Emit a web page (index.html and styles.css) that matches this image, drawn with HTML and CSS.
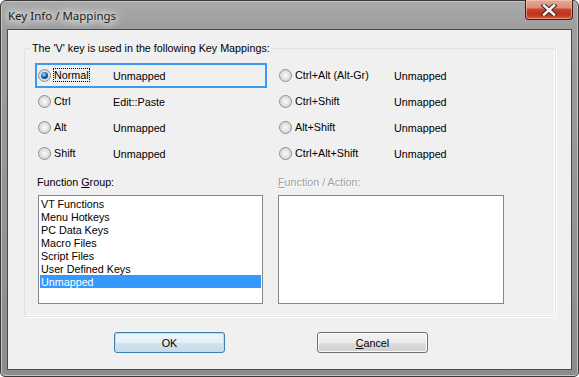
FILE: index.html
```html
<!DOCTYPE html>
<html>
<head>
<meta charset="utf-8">
<link rel="stylesheet" href="styles.css">
</head>
<body>
<div class="window">
  <div class="titlebar">
    <span class="title">Key Info / Mappings</span>
    <button class="close" aria-label="Close">
      <svg width="16" height="12" viewBox="0 0 16 12">
        <path d="M3 1.5 L13 10.5 M13 1.5 L3 10.5" stroke="#3a2a28" stroke-width="4.6" stroke-linecap="square" fill="none"/>
        <path d="M3 1.5 L13 10.5 M13 1.5 L3 10.5" stroke="#f4f4f4" stroke-width="2.6" stroke-linecap="square" fill="none"/>
      </svg>
    </button>
  </div>
  <div class="client">
    <div class="group">
      <span class="group-title">The 'V' key is used in the following Key Mappings:</span>
      <div class="options">
        <div class="opt focused"><span class="radio checked"></span><span class="opt-label"><span class="focus-text">Normal</span></span><span class="opt-value">Unmapped</span></div>
        <div class="opt right"><span class="radio"></span><span class="opt-label">Ctrl+Alt (Alt-Gr)</span><span class="opt-value">Unmapped</span></div>
        <div class="opt"><span class="radio"></span><span class="opt-label">Ctrl</span><span class="opt-value">Edit::Paste</span></div>
        <div class="opt right"><span class="radio"></span><span class="opt-label">Ctrl+Shift</span><span class="opt-value">Unmapped</span></div>
        <div class="opt"><span class="radio"></span><span class="opt-label">Alt</span><span class="opt-value">Unmapped</span></div>
        <div class="opt right"><span class="radio"></span><span class="opt-label">Alt+Shift</span><span class="opt-value">Unmapped</span></div>
        <div class="opt"><span class="radio"></span><span class="opt-label">Shift</span><span class="opt-value">Unmapped</span></div>
        <div class="opt right"><span class="radio"></span><span class="opt-label">Ctrl+Alt+Shift</span><span class="opt-value">Unmapped</span></div>
      </div>
      <div class="lists">
        <div class="list-col">
          <div class="list-label">Function <u>G</u>roup:</div>
          <div class="listbox">
            <div class="item">VT Functions</div>
            <div class="item">Menu Hotkeys</div>
            <div class="item">PC Data Keys</div>
            <div class="item">Macro Files</div>
            <div class="item">Script Files</div>
            <div class="item">User Defined Keys</div>
            <div class="item selected">Unmapped</div>
          </div>
        </div>
        <div class="list-col wide">
          <div class="list-label disabled"><u>F</u>unction / Action:</div>
          <div class="listbox"></div>
        </div>
      </div>
    </div>
    <div class="buttons">
      <button class="btn default">OK</button>
      <button class="btn"><u>C</u>ancel</button>
    </div>
  </div>
</div>
</body>
</html>
```
FILE: styles.css
```css
* { box-sizing: border-box; }
html, body { margin: 0; padding: 0; background: #ffffff; }
body { width: 579px; height: 377px; overflow: hidden; }

.window {
  position: relative;
  width: 579px;
  height: 377px;
  border: 1px solid #3a3a3a;
  border-radius: 6px 6px 5px 5px;
  background: linear-gradient(to bottom, #a9a9a9 0px, #9d9d9d 30px, #8c8c8c 377px);
  box-shadow: inset 0 0 0 1px #c4c4c4;
  padding: 0 6px 6px 6px;
  display: flex;
  flex-direction: column;
}

.titlebar {
  height: 28px;
  display: flex;
  align-items: center;
  padding-left: 1px;
  padding-top: 1px;
}
.title {
  font-family: "Noto Sans", "Open Sans", sans-serif;
  font-size: 11.5px;
  color: #1c1c1c;
  text-shadow: 0 0 6px #ffffff, 0 0 10px #ffffff, 0 0 14px #f0f0f0;
}

.close {
  position: absolute;
  top: -1px;
  right: 5px;
  width: 48px;
  height: 20px;
  border: 1px solid #4d1a12;
  border-top: none;
  border-radius: 0 0 4px 4px;
  padding: 0;
  background: linear-gradient(to bottom, #e6aa98 0%, #d98d78 40%, #c9442b 50%, #c0301c 75%, #d55a3c 100%);
  box-shadow: inset 0 0 0 1px rgba(255, 200, 180, 0.55);
  display: flex;
  align-items: center;
  justify-content: center;
}
.close svg { display: block; }

.client {
  flex: 1;
  border: 1px solid #4a4a4a;
  background: #f0f0f0;
  display: flex;
  flex-direction: column;
  font-family: "Liberation Sans", Arial, sans-serif;
  font-size: 10.75px;
  color: #000;
}

.group {
  position: relative;
  margin: 18px 0 0 16px;
  width: 532px;
  border: 1px solid #dbe3e8;
  border-radius: 3px;
  box-shadow: inset -1px -1px 0 #ffffff, 1px 1px 0 #ffffff;
  padding: 14px 0 12px 10px;
}
.group-title {
  position: absolute;
  top: -8px;
  left: 5px;
  padding: 0 2px;
  line-height: 14px;
  background: #f0f0f0;
}

.options {
  display: grid;
  grid-template-columns: 241px 250px;
  grid-auto-rows: 25px;
  row-gap: 1px;
}
.opt {
  display: flex;
  align-items: center;
  border: 2px solid transparent;
  padding-left: 1px;
  height: 25px;
}
.opt.focused {
  border-color: #3d98f0;
  width: 232px;
}
.radio {
  width: 13px;
  height: 13px;
  border-radius: 50%;
  border: 1px solid #8d8d8d;
  background: radial-gradient(circle at 50% 50%, #fafafa 0, #eeeeee 2px, #d9d9d9 5px, #f4f4f4 6px);
  position: relative;
  flex: none;
  margin-right: 2px;
}
.radio.checked::after {
  content: "";
  position: absolute;
  left: 2px;
  top: 2px;
  width: 7px;
  height: 7px;
  border-radius: 50%;
  background: radial-gradient(circle at 40% 35%, #a6dcff 0, #3a8fd6 2px, #0f4f91 3.5px);
}
.opt-label {
  width: 60px;
  padding: 0 1px;
  line-height: 13px;
  white-space: nowrap;
  flex: none;
}
.opt.right .opt-label { width: 100px; }
.focus-text {
  outline: 1px dotted #000;
  outline-offset: 0;
}
.opt-value { white-space: nowrap; }

.lists {
  display: flex;
  gap: 15px;
  margin-top: 10px;
  padding-left: 3px;
}
.list-col { width: 225px; }
.list-col.wide { width: 226px; }
.list-label {
  line-height: 13px;
  margin: 0 0 6px -1px;
  white-space: nowrap;
}
.list-label.disabled {
  color: #a0a0a0;
  text-shadow: 1px 1px 0 #ffffff;
  margin-left: 0;
}
.listbox {
  height: 109px;
  border: 1px solid #828790;
  background: #ffffff;
  padding: 1px;
}
.item {
  height: 13px;
  line-height: 14px;
  padding-left: 1px;
  white-space: nowrap;
}
.item.selected {
  background: #3399ff;
  color: #ffffff;
}

.buttons {
  display: flex;
  gap: 92px;
  margin: 15px 0 0 106px;
}
.btn {
  width: 111px;
  height: 21px;
  border: 1px solid #707070;
  border-radius: 3px;
  background: linear-gradient(to bottom, #f2f2f2 0%, #ebebeb 50%, #dddddd 51%, #cfcfcf 100%);
  box-shadow: inset 0 0 0 1px #fcfcfc;
  font-family: "Liberation Sans", Arial, sans-serif;
  font-size: 10.75px;
  color: #000;
  padding: 0;
}
.btn.default {
  border-color: #3c7fb1;
  box-shadow: inset 0 0 0 1px #aee4f8;
  background: linear-gradient(to bottom, #eef6fb 0%, #e4eff6 50%, #d2e3ee 51%, #c8dbe8 100%);
}
```
